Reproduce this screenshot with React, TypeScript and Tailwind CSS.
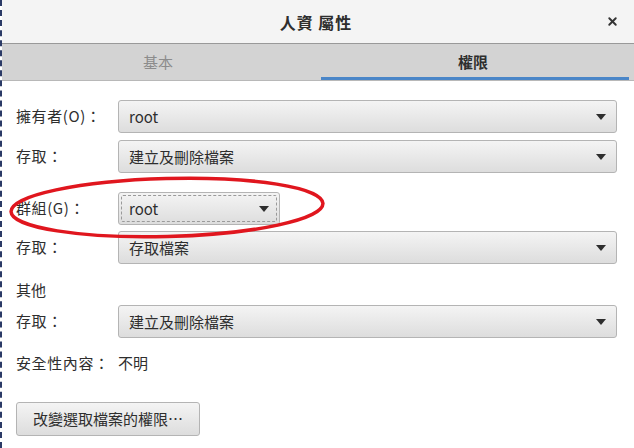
import { X } from 'lucide-react';

const font = { fontFamily: '"Noto Sans CJK TC", "Noto Sans", sans-serif' };

function Arrow() {
  return (
    <svg width="10" height="6" viewBox="0 0 10 6" className="shrink-0">
      <path d="M0 0h10L5 6z" fill="#2e2e2e" />
    </svg>
  );
}

function Dropdown({ value, focused, className = '' }: { value: string; focused?: boolean; className?: string }) {
  return (
    <div
      className={[
        'relative flex h-[33px] items-center justify-between rounded-[3px] border border-[#b4b4b4] bg-gradient-to-b from-[#f4f4f4] to-[#dddddd] pl-[10px] pr-[10px] text-[15px] text-[#2e2e2e]',
        className,
      ].join(' ')}
    >
      {focused && <div className="absolute inset-[2px] rounded-[2px] border border-dashed border-[#9a9a9a]" />}
      <span className="leading-none">{value}</span>
      <Arrow />
    </div>
  );
}

function Row({ label, value, focused, narrow, className = '' }: { label: string; value: string; focused?: boolean; narrow?: boolean; className?: string }) {
  return (
    <div className={['flex items-center', className].join(' ')}>
      <span className="w-[102px] shrink-0 text-[15px] tracking-[0.6px] text-[#2e2e2e]">{label}</span>
      <Dropdown value={value} focused={focused} className={narrow ? 'w-[162px]' : 'w-[499px]'} />
    </div>
  );
}

export default function App() {
  return (
    <div
      className="relative h-[448px] w-[634px] overflow-hidden border-l-2 border-dashed border-[#2b3a66] bg-white"
      style={font}
    >
      {/* 標題列 */}
      <div className="relative flex h-[44px] items-center justify-center border-b border-[#999999] bg-[#f4f4f4] pr-[4px]">
        <span className="text-[16px] font-bold tracking-[1px] text-[#2e2e2e]">人資&nbsp;屬性</span>
        <X size={13} strokeWidth={3.5} className="absolute right-[15px] top-[15px] text-[#333]" />
      </div>

      {/* 分頁 */}
      <div className="flex h-[37px] border-b border-[#b8b8b8] bg-[#d3d3d3]">
        <div className="flex w-[319px] items-center justify-center pr-[7px] text-[15px] text-[#8c8c8c]">基本</div>
        <div className="mr-[5px] flex flex-1 items-center justify-center border-b-[3px] border-[#4a86c8] pt-[3px] pr-[4px] text-[15px] font-bold text-[#2e2e2e]">
          權限
        </div>
      </div>

      {/* 內容 */}
      <div className="flex flex-col pl-[14px]">
        <Row label="擁有者(O)：" value="root" className="mt-[19px]" />
        <Row label="存取：" value="建立及刪除檔案" className="mt-[7px]" />
        <Row label="群組(G)：" value="root" focused narrow className="mt-[19px]" />
        <Row label="存取：" value="存取檔案" className="mt-[6px]" />
        <div className="mt-[16px] text-[15px] leading-[20px] text-[#2e2e2e]">其他</div>
        <Row label="存取：" value="建立及刪除檔案" className="mt-[5px]" />
        <div className="mt-[15px] flex text-[15px] leading-[20px] text-[#2e2e2e]">
          <span className="w-[102px] tracking-[0.6px]">安全性內容：</span>
          <span>不明</span>
        </div>
        <button
          type="button"
          className="mt-[29px] flex h-[34px] w-[184px] items-center justify-center rounded-[3px] border border-[#b4b4b4] bg-gradient-to-b from-[#f4f4f4] to-[#dddddd] text-[15px] text-[#2e2e2e]"
        >
          改變選取檔案的權限…
        </button>
      </div>

      {/* 紅圈標記 */}
      <svg className="pointer-events-none absolute left-0 top-0" width="634" height="448">
        <ellipse cx="165" cy="207.5" rx="156" ry="29" fill="none" stroke="#e0161e" strokeWidth="3.5" transform="rotate(-1.5 165 207.5)" />
      </svg>
    </div>
  );
}
